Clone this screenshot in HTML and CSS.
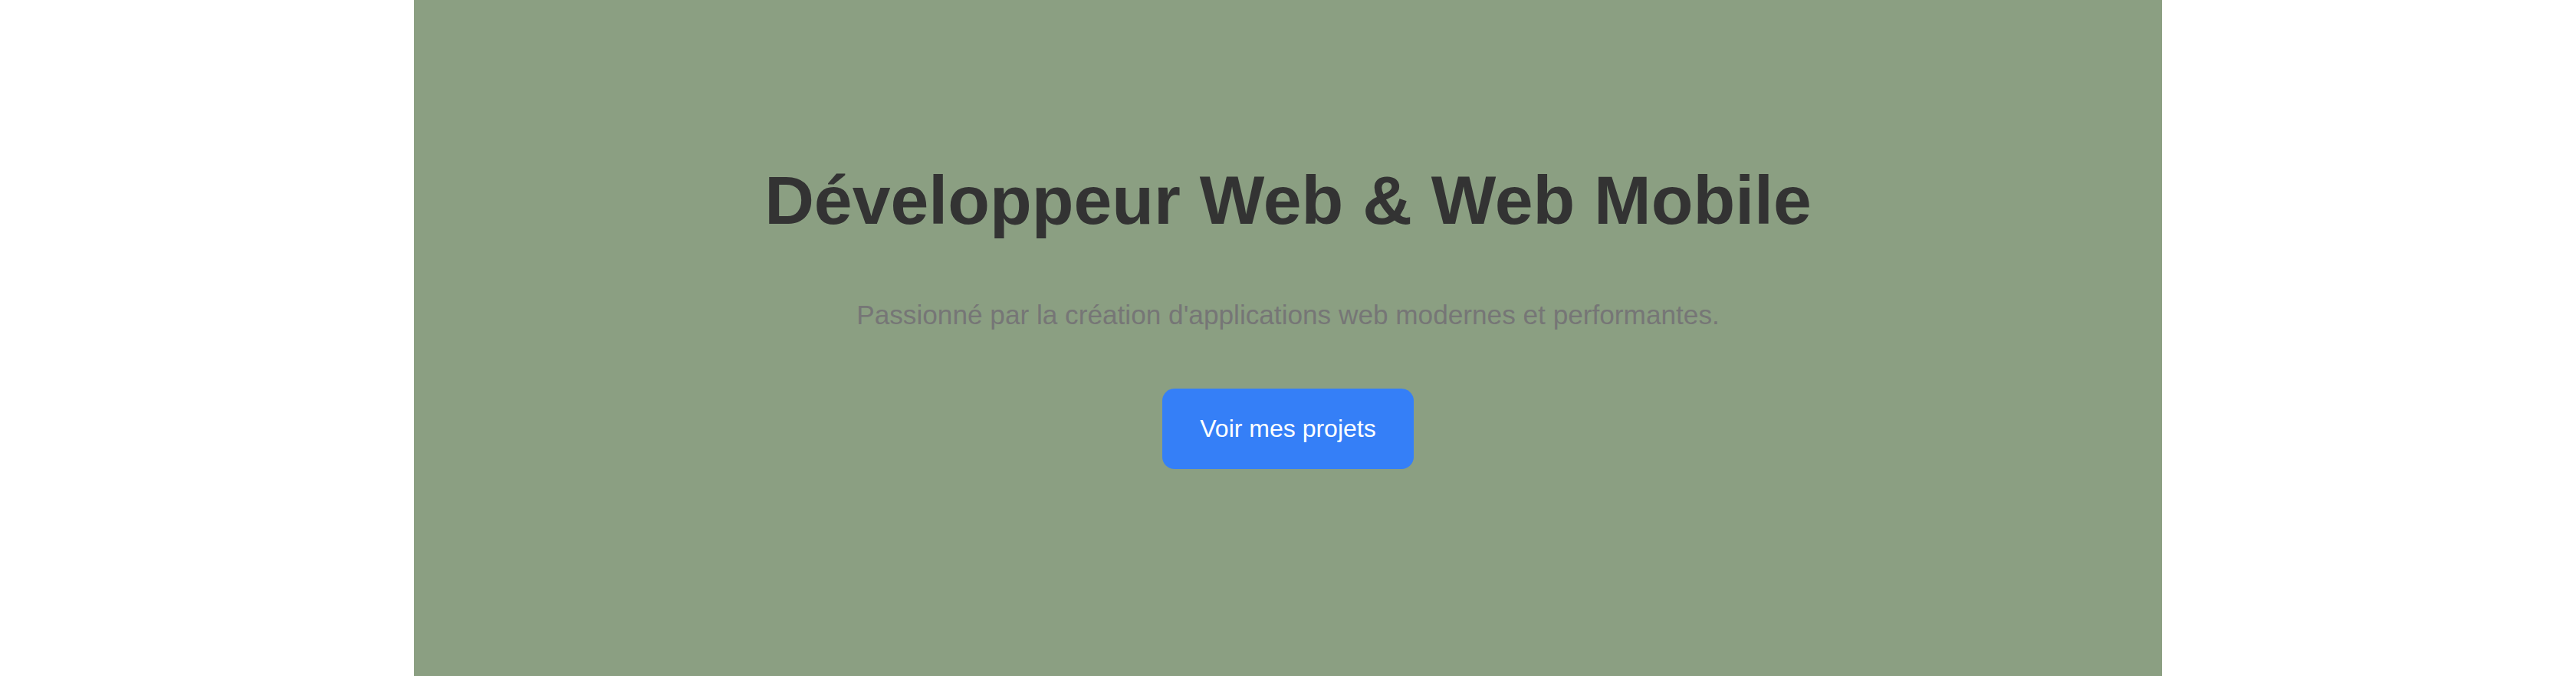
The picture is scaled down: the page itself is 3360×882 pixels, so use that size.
FILE: index.html
```html
<!DOCTYPE html>
<html lang="fr">
<head>
<meta charset="utf-8">
<title>Développeur Web &amp; Web Mobile</title>
<link rel="stylesheet" href="styles.css">
</head>
<body>
  <main class="page">
    <section class="hero">
      <h1 class="hero-title">Développeur Web &amp; Web Mobile</h1>
      <p class="hero-subtitle">Passionné par la création d'applications web modernes et performantes.</p>
      <a class="hero-button" href="#projets">Voir mes projets</a>
    </section>
  </main>
</body>
</html>
```

FILE: styles.css
```css
html, body {
  margin: 0;
  padding: 0;
  background: #ffffff;
  font-family: "Liberation Sans", Arial, Helvetica, sans-serif;
}

.page {
  display: flex;
  justify-content: center;
}

.hero {
  box-sizing: border-box;
  width: 2280px;
  height: 882px;
  background: #8b9f82;
  display: flex;
  flex-direction: column;
  align-items: center;
  padding-top: 208px;
}

.hero-title {
  margin: 0;
  font-size: 89.6px;
  line-height: 1.2;
  font-weight: 700;
  color: #333333;
}

.hero-subtitle {
  margin: 69px 0 0;
  font-size: 35.2px;
  line-height: 1.5;
  color: #767676;
}

.hero-button {
  margin-top: 70px;
  display: inline-block;
  padding: 33px 49px;
  font-size: 32px;
  line-height: 39px;
  color: #ffffff;
  background: #357ff7;
  border-radius: 16px;
  text-decoration: none;
}
```
